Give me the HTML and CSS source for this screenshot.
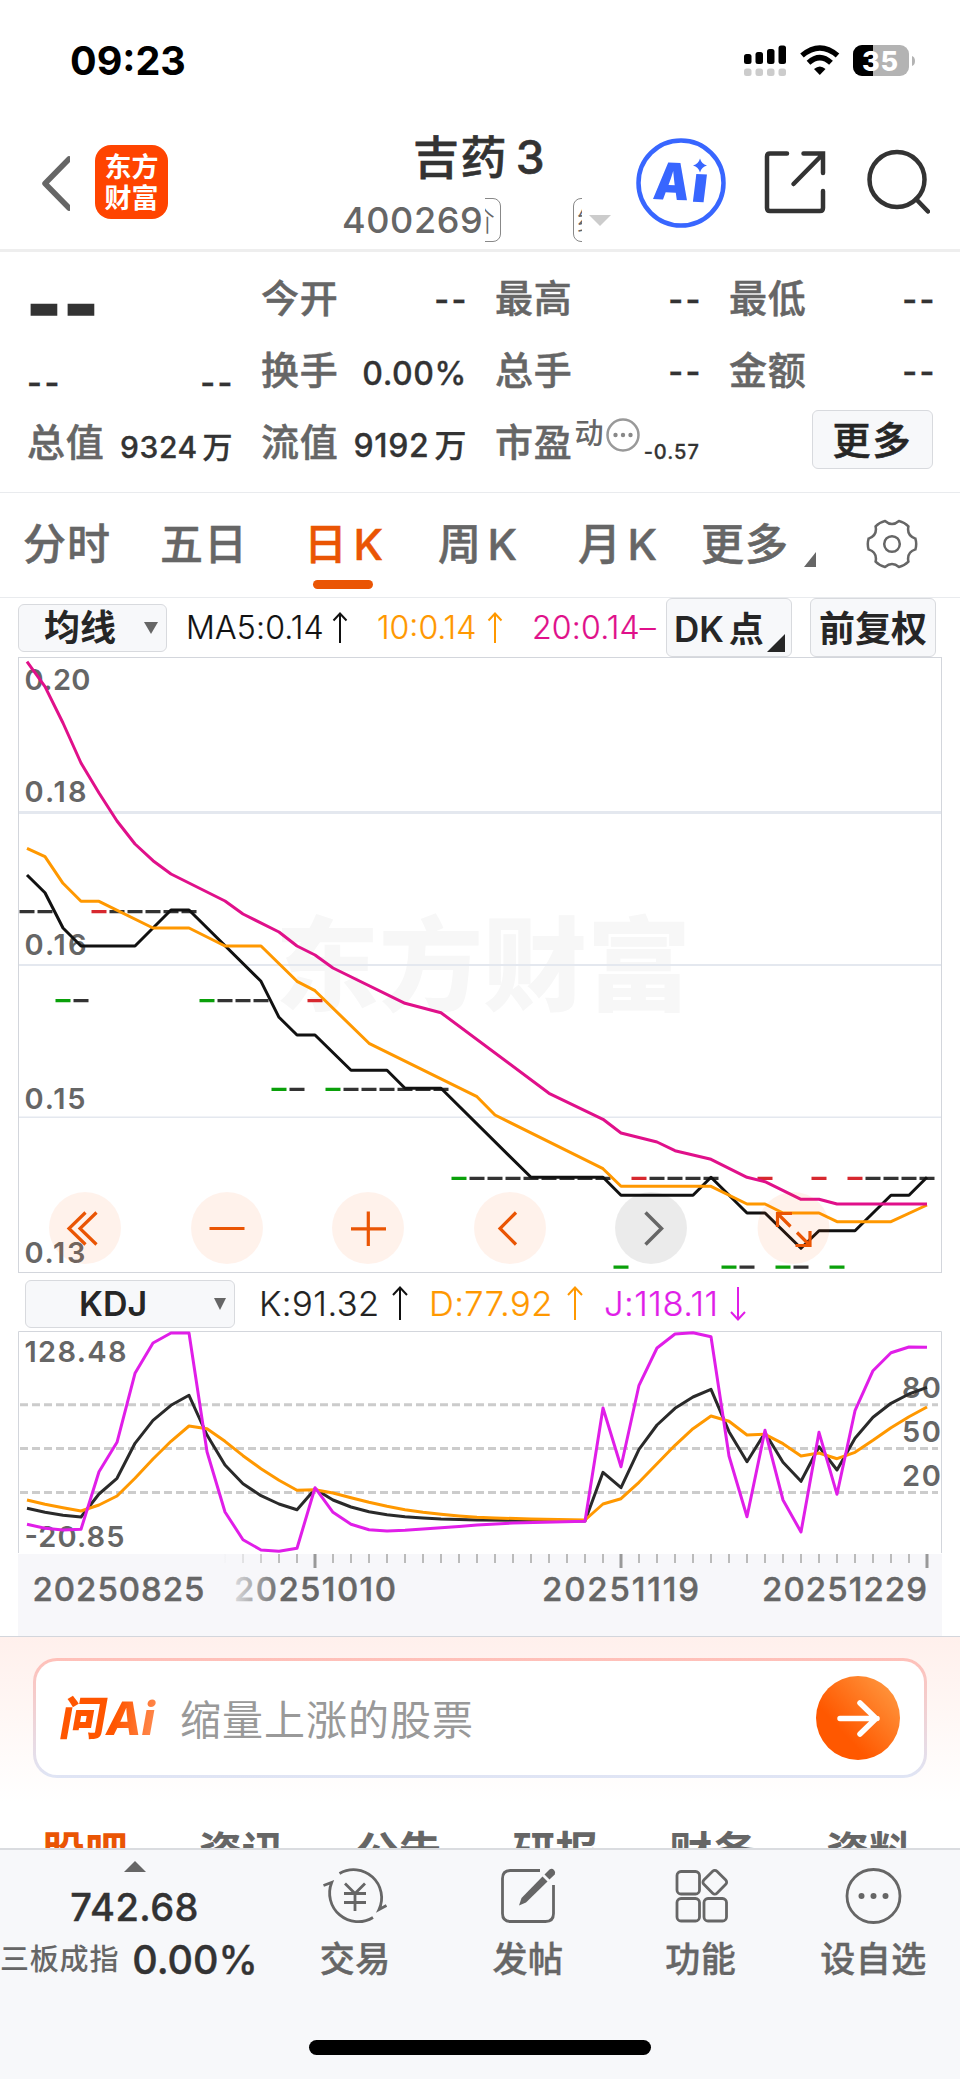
FILE: index.html
```html
<!DOCTYPE html>
<html lang="zh-CN">

<head>
    <meta charset="utf-8">
    <meta name="viewport" content="width=device-width, initial-scale=1.0">
    <title>吉药3 400269</title>
    <link rel="stylesheet" href="styles.css">
</head>

<body>
    <div class="status">
        <span class="time">09:23</span>
        <svg class="status_icons" width="180" height="40" viewBox="740 40 180 40">
            <g fill="#000">
                <rect x="744" y="54" width="7.500" height="10" rx="2.500" />
                <rect x="755.500" y="52" width="7.500" height="12" rx="2.500" />
                <rect x="767" y="49" width="7.500" height="15" rx="2.500" />
                <rect x="778.500" y="45.500" width="7.500" height="18.500" rx="2.500" />
            </g>
            <g fill="#ccc">
                <rect x="744" y="68.500" width="7.500" height="7.500" rx="2.500" />
                <rect x="755.500" y="68.500" width="7.500" height="7.500" rx="2.500" />
                <rect x="767" y="68.500" width="7.500" height="7.500" rx="2.500" />
                <rect x="778.500" y="68.500" width="7.500" height="7.500" rx="2.500" />
            </g>
            <g fill="none" stroke="#000" stroke-width="5.500">
                <path d="M802 55.500Q820 40.500 837.500 55.500" />
                <path d="M808.500 62.800Q820 52.500 831 62.800" />
            </g>
            <path d="M814 69Q820 64 825.500 69L819.800 75Z" fill="#000" />
            <path d="M862 45H900a9 9 0 0 1 9 9V67a9 9 0 0 1-9 9H862a9 9 0 0 1-9-9V54a9 9 0 0 1 9-9Z" fill="#b3b3b3" />
            <path d="M873 45H862a9 9 0 0 0-9 9V67a9 9 0 0 0 9 9H873Z" fill="#000" />
            <path d="M912 56q3 1 3 5t-3 5Z" fill="#b3b3b3" />
            <text class="battery" x="862" y="70.500" textLength="36">35</text>
        </svg>
    </div>

    <header>
        <svg class="back" width="30" height="60" viewBox="40 153 30 60">
            <path d="M69 159L45 183.500L69 208" fill="none" stroke="#666" stroke-width="5.500" stroke-linecap="round" stroke-linejoin="round" />
        </svg>
        <div class="logo">东方<br>财富</div>
        <div class="navn">
            <h1>吉药 3</h1>
            <div class="kode">
                <span class="nummer">400269</span>
                <span class="klip klip_h"><i>价</i></span>
                <span class="klip klip_v"><i>结</i></span>
                <span class="pil"></span>
            </div>
        </div>
        <svg class="header_icons" width="300" height="100" viewBox="630 133 300 100">
            <circle cx="681" cy="183" r="42.500" fill="none" stroke="#3866ff" stroke-width="4.500" />
            <g class="ai" transform="translate(652 199) rotate(2) skewX(-5)">
                <text textLength="36" lengthAdjust="spacingAndGlyphs">A</text>
                <text x="38.500" y="1.500" textLength="16" lengthAdjust="spacingAndGlyphs">ı</text>
            </g>
            <path d="M700 158.500q1.500 5.500 7 7q-5.500 1.500-7 7q-1.500-5.500-7-7q5.500-1.500 7-7Z" fill="#3866ff" />
            <g fill="none" stroke="#333" stroke-width="4.500" stroke-linecap="round">
                <path d="M787 153.500H770q-3 0-3 3V208q0 3 3 3H820q3 0 3-3V191" />
                <path d="M803.500 153.500H823V173M822 155L793.500 184" />
                <circle cx="897" cy="179.500" r="27.500" />
                <path d="M916 199L928 211.500" />
            </g>
        </svg>
    </header>

    <section class="kurs">
        <div class="felt stor"><b>--</b></div>
        <div class="felt"><span>今开</span><b class="tom">--</b></div>
        <div class="felt"><span>最高</span><b class="tom">--</b></div>
        <div class="felt"><span>最低</span><b class="tom">--</b></div>

        <div class="felt lav"><b class="tom">--</b><b class="tom">--</b></div>
        <div class="felt"><span>换手</span><b>0.00%</b></div>
        <div class="felt"><span>总手</span><b class="tom">--</b></div>
        <div class="felt"><span>金额</span><b class="tom">--</b></div>

        <div class="felt lille"><span>总值</span><b>9324 万</b></div>
        <div class="felt"><span>流值</span><b>9192 万</b></div>
        <div class="felt pe">
            <span>市盈</span><sup>动</sup>
            <svg width="34" height="34" viewBox="0 0 34 34">
                <circle cx="17" cy="17" r="15.500" fill="none" stroke="#999" stroke-width="2.500" />
                <g fill="#888"><circle cx="9.500" cy="17" r="2.200" /><circle cx="17" cy="17" r="2.200" /><circle cx="24.500" cy="17" r="2.200" /></g>
            </svg>
            <b>-0.57</b>
        </div>
        <div class="felt hojre"><button class="mere">更多</button></div>
    </section>

    <nav class="perioder">
        <a>分时</a>
        <a>五日</a>
        <a class="valgt">日 K</a>
        <a>周 K</a>
        <a>月 K</a>
        <a>更多<i class="hjorne"></i></a>
        <svg width="52" height="52" viewBox="-26 -26 52 52">
            <path d="M23.400-5.400Q25 0 23.400 5.400Q14.500 8.400 16.400 17.600Q12.500 21.700 7 23Q0 17-7 23Q-12.500 21.700-16.400 17.600Q-14.500 8.400-23.400 5.400Q-25 0-23.400-5.400Q-14.500-8.400-16.400-17.600Q-12.500-21.700-7-23Q0-17 7-23Q12.500-21.700 16.400-17.600Q14.500-8.400 23.400-5.400Z" fill="none" stroke="#666" stroke-width="2.500" />
            <circle r="7.800" fill="none" stroke="#666" stroke-width="2.500" />
        </svg>
    </nav>

    <div class="linje ma">
        <button class="vaelger">均线</button>
        <span class="tal ma5">MA5:0.14</span>
        <svg class="op" width="16" height="32" viewBox="0 0 16 32"><path d="M8 31V1.500M1.500 8.500L8 1.500L14.500 8.500" /></svg>
        <span class="tal ma10">10:0.14</span>
        <svg class="op orange" width="16" height="32" viewBox="0 0 16 32"><path d="M8 31V1.500M1.500 8.500L8 1.500L14.500 8.500" /></svg>
        <span class="tal ma20">20:0.14–</span>
        <button class="dk">DK 点<i></i></button>
        <button class="fq">前复权</button>
    </div>

    <!-- K-line, one trading day for every 18px -->
    <svg class="graf" width="960" height="616" viewBox="0 657 960 616">
        <text class="vandmaerke" x="275" y="1003" textLength="416" lengthAdjust="spacingAndGlyphs">东方财富</text>
        <g fill="#e4e8ef">
            <rect x="19" y="811" width="922" height="3" />
            <rect x="19" y="964" width="922" height="2" />
            <rect x="19" y="1116.500" width="922" height="1.500" />
        </g>
        <rect x="18.500" y="657.500" width="923" height="615" fill="none" stroke="#d3d6dc" />

        <g class="skala">
            <text x="24.500" y="690" textLength="66">0.20</text>
            <text x="24.500" y="802" textLength="62">0.18</text>
            <text x="24.500" y="955" textLength="62">0.16</text>
            <text x="24.500" y="1109" textLength="61">0.15</text>
            <text x="24.500" y="1262.500" textLength="61">0.13</text>
        </g>

        <g fill="none" stroke-width="3.200">
            <path stroke="#333" d="M19.500 911.700h15m3 0h15M109.500 911.700h15m3 0h15m3 0h15m3 0h15m3 0h15M73.500 1000.700h15M217.500 1000.700h15m3 0h15m3 0h15M289.500 1089.300h15M343.500 1089.300h15m3 0h15m3 0h15m3 0h15m3 0h15m3 0h15M469.500 1178.400h15m3 0h15m3 0h15m3 0h15m3 0h15m3 0h15m3 0h15m3 0h15M649.500 1178.400h15m3 0h15m3 0h15m3 0h15M865.500 1178.400h15m3 0h15m3 0h15m3 0h15M739.500 1267.200h15M793.500 1267.200h15" />
            <path stroke="#d7282f" d="M91.500 911.700h15M307.500 1000.700h15M631.500 1178.400h15M757.500 1178.400h15M811.500 1178.400h15M847.500 1178.400h15" />
            <path stroke="#0aa00a" d="M55.500 1000.700h15M199.500 1000.700h15M271.500 1089.300h15M325.500 1089.300h15M451.500 1178.400h15M613.500 1267.200h15M721.500 1267.200h15M775.500 1267.200h15M829.500 1267.200h15" />
        </g>

        <g fill="none" stroke-width="3" stroke-linejoin="round">
            <polyline stroke="#111" points="27,875 45,892.700 63,928 81,946 135,946 171,910 189,910 261,981.300 279,1017.300 297,1035 315,1035 351,1070.300 387,1070.300 405,1088.300 441,1088.300 531,1177.300 603,1177.300 621,1195.300 693,1195.300 711,1177.300 747,1213 765,1213 801,1248.300 819,1230.700 855,1230.700 891,1195.300 909,1195.300 927,1177.300" />
            <polyline stroke="#ff9800" points="27,848.300 45,856.700 63,883.300 81,901.300 99,901.300 153,928 189,928 225,946 261,946 297,981.300 315,990.700 369,1043.300 477,1096.700 495,1115 603,1168.700 621,1186.300 711,1186.300 747,1204 765,1204 783,1213 819,1213 837,1221.700 891,1221.700 927,1205" />
            <polyline stroke="#e0108a" points="27,661.700 45,686.700 63,723 81,763 99,793 117,821 135,844 153,860.700 171,874 225,901 243,914 279,932 297,946 315,955 333,968 405,1003.300 441,1012.700 549,1093.300 603,1119.300 621,1133 657,1142 675,1150.700 711,1159.300 747,1177.300 765,1181.700 801,1199.300 819,1199.300 837,1204 927,1204" />
        </g>

        <g fill="#ff5500" fill-opacity=".08">
            <circle cx="85" cy="1228" r="36" />
            <circle cx="227" cy="1228" r="36" />
            <circle cx="368" cy="1228" r="36" />
            <circle cx="510" cy="1228" r="36" />
            <circle cx="793.500" cy="1228" r="36" />
        </g>
        <circle cx="651" cy="1228" r="36" fill="#000" fill-opacity=".08" />
        <g fill="none" stroke="#ea5504" stroke-width="3.200">
            <path d="M85.500 1212.500L69 1228.500L85.500 1244.500M96.500 1212.500L80 1228.500L96.500 1244.500" />
            <path d="M209.500 1228.500H244.500" />
            <path d="M351 1228.800H386M368.300 1211.500V1246" />
            <path d="M516 1212.500L500 1228.500L516 1244.500" />
            <path d="M792 1213.500H777.500V1227M778 1214L790.500 1226.500M795.500 1245.500H810V1231M809.500 1245L797 1232.500" />
        </g>
        <path d="M645.500 1212.500L661.500 1228.500L645.500 1244.500" fill="none" stroke="#666" stroke-width="3.500" />
    </svg>

    <div class="linje kdj">
        <button class="vaelger bred">KDJ</button>
        <span class="tal k">K:91.32</span>
        <svg class="op" width="16" height="35" viewBox="0 0 16 35"><path d="M8 34V1.500M1 9L8 1.500L15 9" /></svg>
        <span class="tal d">D:77.92</span>
        <svg class="op orange" width="16" height="35" viewBox="0 0 16 35"><path d="M8 34V1.500M1 9L8 1.500L15 9" /></svg>
        <span class="tal j">J:118.11</span>
        <svg class="op lilla" width="16" height="35" viewBox="0 0 16 35"><path d="M8 1V33.500M1 26L8 33.500L15 26" /></svg>
    </div>

    <svg class="graf" width="960" height="305" viewBox="0 1331 960 305">
        <defs>
            <linearGradient id="udton">
                <stop offset="0" stop-color="#f7f7fa" />
                <stop offset="1" stop-color="#f7f7fa" stop-opacity="0" />
            </linearGradient>
        </defs>
        <rect x="18" y="1554" width="924" height="82" fill="#f7f7fa" />
        <path d="M18.500 1553V1331.500H941.500V1553" fill="none" stroke="#d3d6dc" />
        <path d="M20 1404.700H938M20 1448.500H938M20 1492.400H938" fill="none" stroke="#ccc" stroke-width="3" stroke-dasharray="8 4" />

        <g class="skala">
            <text x="24.500" y="1362" textLength="102">128.48</text>
            <text x="24.500" y="1546.500" textLength="100">-20.85</text>
            <text x="902" y="1397.500" textLength="39">80</text>
            <text x="902" y="1441.500" textLength="39">50</text>
            <text x="902" y="1485.500" textLength="39">20</text>
        </g>

        <g fill="none" stroke-width="3" stroke-linejoin="round">
            <polyline stroke="#2a2a2a" points="27,1508.300 45,1512.300 63,1515.300 81,1517 99,1494 117,1478.300 135,1443.300 153,1420.300 171,1405.300 189,1395.300 207,1435 225,1465 243,1483.700 261,1495.700 279,1504 297,1509.700 315,1489 333,1500 351,1507 369,1511.700 387,1514.700 405,1516.700 423,1518 441,1519 477,1520 585,1521 603,1472.300 621,1487.700 639,1449.300 657,1425 675,1408.300 693,1397 711,1389.300 729,1431.700 747,1461.700 765,1432.700 783,1462.300 801,1481.300 819,1446.700 837,1470 855,1438.300 873,1417.300 891,1403.300 909,1394 927,1387.300" />
            <polyline stroke="#ff9800" points="27,1500 45,1504.300 63,1507.700 81,1511 99,1505 117,1496 135,1478.300 153,1459 171,1441.300 189,1426 207,1428.700 225,1441.300 243,1455.700 261,1468.700 279,1480.300 297,1490.300 315,1489.700 333,1493 351,1497.700 369,1502.300 387,1506.300 405,1509.700 423,1512.300 441,1514.300 459,1516 477,1517.300 495,1518 531,1519 585,1520 603,1504 621,1498.700 639,1482.300 657,1463.700 675,1445.300 693,1428.700 711,1416 729,1421.300 747,1435 765,1434.300 783,1443.700 801,1456 819,1453 837,1458.700 855,1452.300 873,1440.300 891,1427.700 909,1416.700 927,1407" />
            <polyline stroke="#e01ee8" points="27,1524.300 45,1528.300 63,1530 81,1529.300 99,1471.700 117,1442.300 135,1373.300 153,1343 171,1333 189,1333 207,1451.700 225,1512 243,1539.700 261,1550 279,1551.300 297,1548.300 315,1487.700 333,1512.300 351,1524.300 369,1529.700 387,1531 405,1530.300 423,1529 441,1527.700 459,1526.500 477,1525 513,1523 585,1521.300 603,1408 621,1466.700 639,1385.300 657,1348 675,1334 693,1332.700 711,1336.700 729,1456 747,1516.700 765,1430.300 783,1500 801,1532 819,1432.300 837,1494.300 855,1410.700 873,1370.700 891,1352.700 909,1347 927,1347.300" />
        </g>

        <path d="M224 1558.500H930" stroke="#bbb" stroke-width="9" stroke-dasharray="2 16" />
        <path d="M315 1554V1568M621 1554V1568M927 1554V1568" stroke="#999" stroke-width="3" />
        <g class="datoer">
            <text x="32.500" y="1600.500" textLength="172">20250825</text>
            <text x="234" y="1600.500" textLength="162">20251010</text>
            <text x="542" y="1600.500" textLength="157">20251119</text>
            <text x="762" y="1600.500" textLength="165">20251229</text>
        </g>
        <rect x="222" y="1554" width="60" height="60" fill="url(#udton)" />
    </svg>

    <section class="spoerg">
        <div class="soeg">
            <span class="ai_logo">问Ai</span>
            <span class="forslag">缩量上涨的股票</span>
            <svg width="84" height="84" viewBox="0 0 84 84">
                <defs>
                    <linearGradient id="knap" x1=".3" y1=".65" x2=".85" y2=".15">
                        <stop offset="0" stop-color="#ff5800" />
                        <stop offset="1" stop-color="#ff9038" />
                    </linearGradient>
                </defs>
                <circle cx="42" cy="42" r="42" fill="url(#knap)" />
                <path d="M24 42.500H61M44 27L60 42.500L44 58" fill="none" stroke="#fff" stroke-width="5.500" stroke-linecap="round" stroke-linejoin="round" />
            </svg>
        </div>
        <nav class="faner">
            <a class="valgt">股吧</a>
            <a>资讯</a>
            <a>公告</a>
            <a>研报</a>
            <a>财务</a>
            <a>资料</a>
        </nav>
    </section>

    <footer>
        <div class="indeks">
            <i class="pil_op"></i>
            <b>742.68</b>
            <p>三板成指<b>0.00%</b></p>
        </div>
        <div class="punkt">
            <svg width="66" height="60" viewBox="323 1866 66 60">
                <path d="M340.500 1873.500A28 28 0 0 1 380 1909.500L387.500 1905.500M374 1917.500A28.500 28.500 0 0 1 332.700 1882.500L324.500 1885.500" />
                <path d="M346 1883.500L356 1893.500L366 1883.500M345 1893.500H367M345 1902.500H367M356 1893V1911" />
            </svg>
            交易
        </div>
        <div class="punkt">
            <svg width="60" height="60" viewBox="499 1866 60 60">
                <path d="M541 1870.500H511.500q-8 0-8 8V1913.500q0 8 8 8H546.500q8 0 8-8V1885" />
                <path class="fyld" d="M520 1905.500L522.500 1898L543.500 1876.500L548.500 1881.500L527 1902.500Z" />
                <path class="fyld" d="M545.500 1874.500L550.500 1869.500q2.500-1.500 4.500.5t.8 4.500L550.500 1879.500Z" />
            </svg>
            发帖
        </div>
        <div class="punkt">
            <svg width="60" height="60" viewBox="671 1866 60 60">
                <rect x="677" y="1871.500" width="22.500" height="22.500" rx="4" />
                <rect x="677" y="1898.500" width="22.500" height="22.500" rx="4" />
                <rect x="704" y="1898.500" width="22.500" height="22.500" rx="4" />
                <rect x="705.500" y="1873" width="18.500" height="18.500" rx="3" transform="rotate(45 714.800 1882.300)" />
            </svg>
            功能
        </div>
        <div class="punkt">
            <svg width="60" height="60" viewBox="843.500 1866 60 60">
                <circle cx="874" cy="1896" r="26.500" />
                <g class="fyld"><circle cx="862" cy="1896" r="3" /><circle cx="874" cy="1896" r="3" /><circle cx="886" cy="1896" r="3" /></g>
            </svg>
            设自选
        </div>
        <div class="hjem"></div>
    </footer>

</body>

</html>
```
FILE: styles.css
```css
* {
    box-sizing: border-box;
}

body {
    margin: 0;
    width: 960px;
    height: 2079px;
    overflow: hidden;
    background-color: #fff;
    color: #666;
    font-family: Inter, "Noto Sans CJK SC", sans-serif;
    font-weight: 500;
}

svg {
    display: block;
    flex: none;
}

b {
    font-weight: 500;
    color: #333;
}

i {
    font-style: normal;
}

button {
    font: inherit;
    color: #262626;
    background-color: #f7f8fa;
    border: 1.5px solid #d8dade;
    border-radius: 6px;
    padding: 0;
    white-space: nowrap;
}

/* top */

.status {
    height: 120px;
    display: flex;
    align-items: flex-start;
    justify-content: space-between;
    padding: 40px 40px 0 70px;
}

.time {
    font-size: 39.5px;
    font-weight: 700;
    line-height: 42px;
    color: #000;
}

.battery {
    font-size: 27px;
    font-weight: 800;
    fill: #fff;
}

header {
    height: 132px;
    border-bottom: 3px solid #eee;
    display: flex;
    align-items: flex-start;
}

.back {
    margin: 33px 0 0 40px;
}

.logo {
    width: 73px;
    height: 74px;
    margin: 25px 0 0 25px;
    padding-top: 7px;
    border-radius: 16px;
    background-color: #ff4400;
    color: #fff;
    font-size: 27px;
    font-weight: 700;
    line-height: 31px;
    text-align: center;
}

.navn {
    width: 462px;
    height: 129px;
}

h1 {
    margin: 9px 0 0 245px;
    font-size: 46px;
    font-weight: 500;
    line-height: 56px;
    letter-spacing: 1.5px;
    word-spacing: -6px;
    color: #333;
    white-space: nowrap;
    -webkit-text-stroke: .6px;
}

.kode {
    display: flex;
    align-items: center;
    height: 50px;
    margin: 10px 0 0 174px;
}

.nummer {
    width: 143px;
    font-size: 36px;
    letter-spacing: .6px;
}

.klip {
    display: flex;
    width: 16px;
    overflow: hidden;
    font-size: 32px;
    font-weight: 300;
    line-height: 42px;
}

.klip i {
    flex: none;
    width: 44px;
    text-align: center;
    border: 1.5px solid #888;
    border-radius: 8px;
}

.klip_h {
    justify-content: flex-end;
}

.klip_v {
    width: 9px;
    margin-left: 72px;
}

.klip.klip_v i {
    width: 40px;
}

.pil {
    margin-left: 7px;
    border: 11px solid transparent;
    border-top-color: #ccc;
    border-bottom: 0;
}

.header_icons {
    margin: 13px 0 0 0;
}

.ai {
    font-size: 51px;
    font-weight: 900;
    fill: #3866ff;
}

/* kurs */

.kurs {
    height: 241px;
    padding: 10px 26px 0 27px;
    border-bottom: 1px solid #e9ebee;
    display: grid;
    grid-template-columns: repeat(4, 206px);
    grid-auto-rows: 72px;
    column-gap: 28px;
}

.felt {
    display: flex;
    justify-content: space-between;
    align-items: flex-start;
    font-size: 38px;
    line-height: 72px;
    white-space: nowrap;
}

.felt span {
    letter-spacing: .8px;
    -webkit-text-stroke: .5px;
}

.felt b {
    font-size: 32px;
    line-height: 80px;
    letter-spacing: .6px;
    word-spacing: -4px;
    -webkit-text-stroke: .3px;
}

.felt .tom {
    font-weight: 600;
    line-height: 75px;
    letter-spacing: 2.5px;
    margin-right: -2px;
}

.felt.lav .tom {
    line-height: 97px;
}

.felt.stor b {
    font-size: 72px;
    font-weight: 800;
    line-height: 86px;
    letter-spacing: 3px;
    -webkit-text-stroke: 2.5px;
}

.felt.lille b {
    font-size: 30px;
    line-height: 82px;
}

.pe {
    justify-content: flex-start;
}

.pe sup {
    font-size: 29px;
    line-height: 30px;
    margin: 13px 2px 0 2px;
}

.pe svg {
    margin-top: 12px;
}

.felt.pe b {
    font-size: 20px;
    line-height: 92px;
    letter-spacing: 1px;
    margin-left: 4px;
}

.hojre {
    justify-content: flex-end;
}

.mere {
    width: 121px;
    height: 59px;
    margin: 4px 2px 0 0;
    font-size: 38px;
    line-height: 56px;
    letter-spacing: 2px;
    -webkit-text-stroke: .6px;
}

/* perioder */

.perioder {
    height: 105px;
    padding-left: 23px;
    border-bottom: 1px solid #e9ebee;
    display: grid;
    grid-template-columns: 137px 144px 134px 140px 123px 165px 52px;
    font-size: 43px;
    line-height: 103px;
    letter-spacing: 1px;
    word-spacing: -7px;
    white-space: nowrap;
    -webkit-text-stroke: .5px;
}

.perioder svg {
    margin-top: 25px;
}

.valgt {
    color: #ea5504;
}

.perioder .valgt::after {
    content: "";
    display: block;
    width: 60px;
    height: 9px;
    margin: -16px 0 0 9px;
    border-radius: 5px;
    background-color: #ea5504;
}

.hjorne {
    display: inline-block;
    margin-left: 15px;
    border-left: 12px solid transparent;
    border-bottom: 15px solid #666;
    vertical-align: -7px;
}

/* linjer over graferne */

.linje {
    height: 59px;
    display: flex;
    align-items: center;
}

.vaelger {
    width: 149px;
    height: 48px;
    margin-left: 18px;
    padding: 0 8px 0 25px;
    display: flex;
    align-items: center;
    justify-content: space-between;
    font-size: 36px;
    font-weight: 600;
    line-height: 44px;
}

.vaelger::after {
    content: "";
    border: 7.5px solid transparent;
    border-top: 12px solid #666;
    border-bottom: 0;
}

.tal {
    font-size: 32px;
    font-weight: 300;
    line-height: 40px;
    white-space: nowrap;
    -webkit-text-stroke: .2px;
}

.op {
    fill: none;
    stroke: #111;
    stroke-width: 2;
}

.orange {
    stroke: #ff9800;
}

.lilla {
    stroke: #e01ee8;
}

.ma5 {
    width: 146px;
    margin-left: 19px;
    letter-spacing: .2px;
    color: #111;
}

.ma10 {
    width: 110px;
    margin-left: 29px;
    color: #ff9800;
}

.ma20 {
    width: 134px;
    margin-left: 29px;
    letter-spacing: .2px;
    color: #e0108a;
}

.dk,
.fq {
    width: 126px;
    height: 59px;
    padding-bottom: 3px;
    font-size: 35px;
    font-weight: 600;
    flex: none;
}

.dk {
    display: flex;
    align-items: center;
    padding-left: 7px;
    word-spacing: -4px;
}

.dk i {
    align-self: flex-end;
    margin: 0 0 1px 3px;
    border-left: 18px solid transparent;
    border-bottom: 18px solid #262626;
}

.fq {
    margin-left: 18px;
    font-size: 36px;
}

.kdj {
    height: 58px;
    padding-top: 3px;
}

.kdj .tal {
    font-size: 34.5px;
}

.vaelger.bred {
    width: 210px;
    margin-left: 25px;
    padding-left: 53px;
    font-size: 34px;
}

.bred::after {
    border-width: 12px 6.5px 0;
}

.k {
    width: 133px;
    margin-left: 24px;
    letter-spacing: .5px;
    color: #222;
}

.d {
    width: 138px;
    margin-left: 21px;
    letter-spacing: .4px;
    color: #ff9800;
}

.j {
    width: 126px;
    margin-left: 21px;
    letter-spacing: .5px;
    color: #e01ee8;
}

/* grafer */

.vandmaerke {
    font-size: 102px;
    font-weight: 900;
    fill: #f7f7f7;
}

.skala {
    font-size: 29px;
    font-weight: 600;
    fill: #666;
}

.datoer {
    font-size: 33px;
    fill: #666;
    stroke: #666;
    stroke-width: .4px;
}

/* spørg ai */

.spoerg {
    height: 212px;
    padding: 21px 33px 0;
    overflow: hidden;
    border-top: 1px solid #d3d6dc;
    background: linear-gradient(#fff0ec, #fff 165px);
}

.soeg {
    height: 120px;
    padding: 0 24px;
    display: flex;
    align-items: center;
    border: 3px solid transparent;
    border-radius: 24px;
    background: linear-gradient(#fff, #fff) padding-box, linear-gradient(#ffc0b8, #dfe5f5) border-box;
}

.ai_logo {
    width: 108px;
    margin-left: 1px;
    font-size: 46px;
    font-weight: 800;
    line-height: 60px;
    transform: skewX(-10deg);
    color: transparent;
    background: linear-gradient(90deg, #ff5500 50%, #ff9966);
    -webkit-background-clip: text;
    background-clip: text;
}

.forslag {
    flex: 1;
    margin-left: 11px;
    padding-bottom: 2px;
    font-size: 41px;
    font-weight: 400;
    letter-spacing: 1px;
    color: #999;
}

.faner {
    display: grid;
    grid-template-columns: repeat(6, 156.8px);
    margin: 48px 0 0 9px;
    font-size: 43px;
    font-weight: 700;
    line-height: 52px;
}

/* bund */

footer {
    height: 231px;
    border-top: 2px solid #dadce0;
    background-color: #f7f8fa;
    display: grid;
    grid-template-columns: 269px repeat(4, 172.700px);
    grid-template-rows: 190px 15px;
}

.indeks {
    display: flex;
    flex-direction: column;
    align-items: center;
    padding: 11px 0 0;
}

.pil_op {
    border: 11px solid transparent;
    border-bottom-color: #666;
    border-top: 0;
}

.indeks b {
    font-size: 38px;
    line-height: 70px;
    letter-spacing: .4px;
    -webkit-text-stroke: .4px;
}

.indeks p {
    align-self: flex-start;
    display: flex;
    align-items: center;
    margin: 0;
    font-size: 29px;
    line-height: 36px;
    letter-spacing: .8px;
    white-space: nowrap;
}

.indeks p b {
    margin-left: 13px;
    font-size: 39.5px;
    line-height: 36px;
    letter-spacing: 0;
}

.punkt {
    display: flex;
    flex-direction: column;
    align-items: center;
    padding-top: 16px;
    font-size: 35px;
    line-height: 66px;
    letter-spacing: .5px;
    -webkit-text-stroke: .4px;
}

.punkt svg {
    fill: none;
    stroke: #666;
    stroke-width: 2.8;
}

.punkt .fyld {
    fill: #666;
    stroke: none;
}

.hjem {
    grid-column: 1 / -1;
    justify-self: center;
    width: 342px;
    height: 15px;
    border-radius: 8px;
    background-color: #000;
}
```
